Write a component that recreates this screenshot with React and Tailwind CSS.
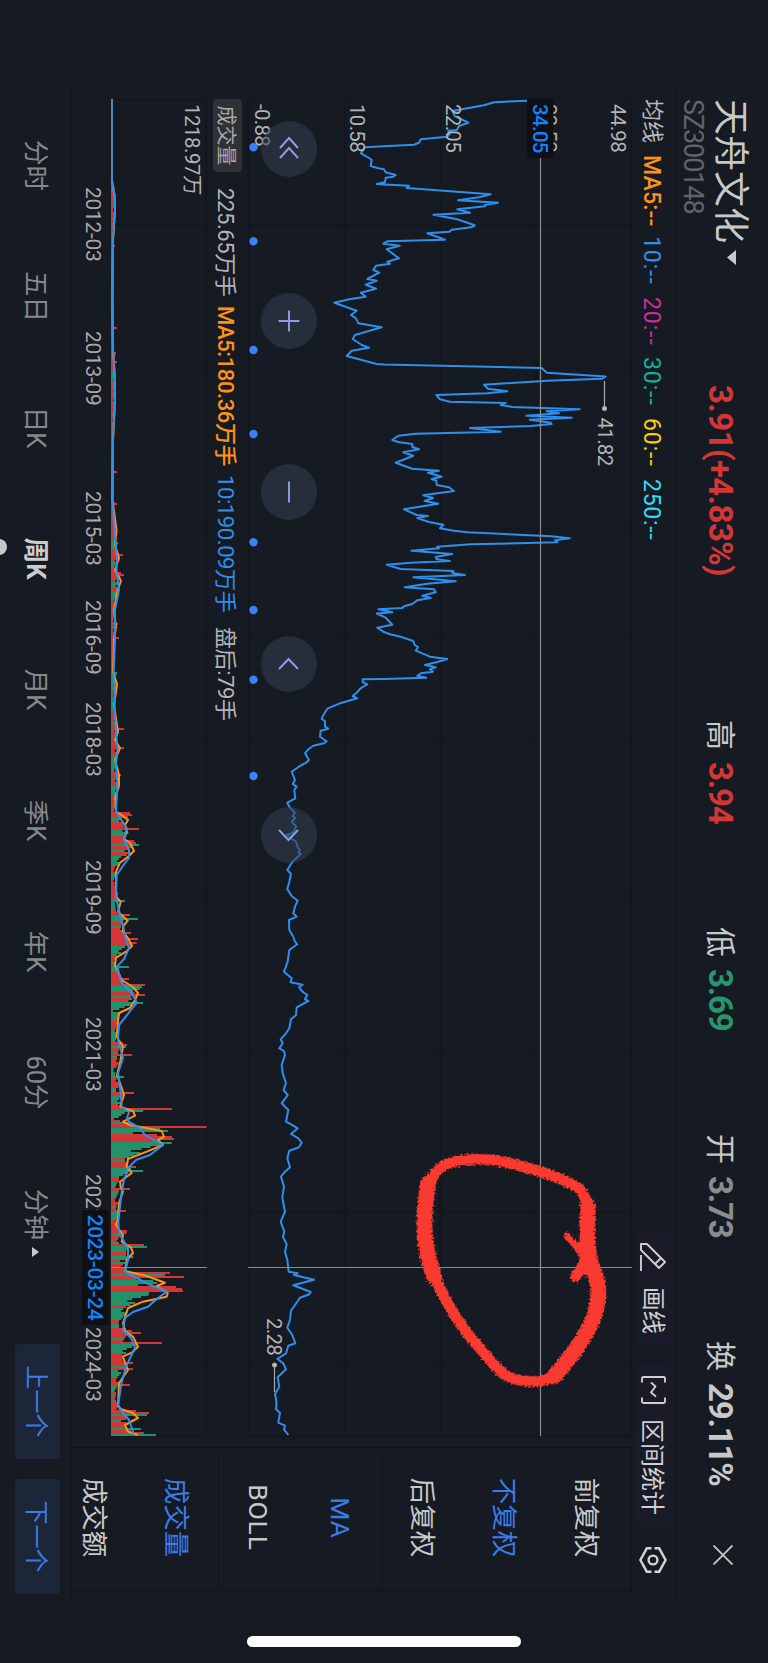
import React from "react";

// Chart geometry, in screen pixels along the time axis
const T0 = 99;
const CHART_W = 1337;
const PRICE_TOP = 632;
const PRICE_H = 384;
const VOL_H = 96;

const gridTimes = [225, 368, 528, 637, 739, 896, 1054, 1212, 1363];

const dividendDots = [147.3, 241.3, 350, 434, 542.3, 610, 679.7, 776];

// [time, level]
const price = [
  [100.7, 527], [102.3, 494], [105.3, 484], [111, 452.3], [116, 454.7], [122.7, 468.3], [126, 459], [130, 456.7],
  [130.7, 448.3], [134, 449.7], [136.7, 447.3], [139.3, 420.7], [142.7, 419], [144.7, 414], [146.3, 384], [147.3, 365],
  [153.3, 361], [157.3, 368], [160, 371.7], [166, 370.7], [168.3, 378.3], [169.3, 384], [172.3, 385.7], [175, 395.7],
  [176.7, 393.3], [177.7, 385.7], [182.3, 385], [184, 376.7], [184.5, 384], [185.7, 409], [188, 406.7], [194.3, 490.7],
  [197.3, 479], [200.3, 458], [202.7, 498], [205, 485], [206.3, 485], [209.3, 457.3], [212.7, 470], [214.7, 433.3],
  [219.3, 457.3], [225.3, 474.7], [227.3, 471.3], [229.7, 451.7], [231.7, 449.3], [233.3, 427.3], [239.7, 445],
  [241.3, 387.3], [243.7, 383.3], [245.7, 399.7], [249.3, 386.7], [258.3, 399], [261.7, 387.3], [263.7, 390],
  [265.7, 376], [270, 373.3], [272.7, 379.3], [279, 367.3], [280.7, 376.7], [284.7, 365.7], [288.7, 376],
  [292.7, 360.7], [296.7, 365.7], [299.3, 349.3], [302.7, 334.3], [310.7, 356.7], [315, 351], [318.3, 356],
  [323.3, 358.3], [327.3, 381.7], [335, 355], [339, 352.7], [345, 361.7], [347.7, 369], [350.7, 351.7], [356, 346.7],
  [364, 376.7], [364.5, 384], [368, 541.7], [372.7, 546.7], [376.5, 605.7], [378.7, 602.3], [380.7, 547.3],
  [384.7, 484], [388.7, 488], [391.3, 507.3], [393.3, 487.3], [395, 436.3], [399.3, 440], [401.7, 449.7], [403, 505.7],
  [405, 500.7], [407, 512.3], [409.3, 579.7], [411.3, 546.7], [413.3, 559], [415.7, 526.3], [417.7, 571.7],
  [419.7, 529.7], [422.7, 550.7], [424, 551.7], [426, 530.7], [428, 470], [431.7, 500.7], [433.7, 415.7],
  [435.7, 398.3], [440, 392.3], [442, 398], [444, 412.3], [447, 412.3], [449.3, 419], [452.3, 403.3], [455.7, 413.3],
  [462.7, 395.7], [468.7, 412.3], [470.7, 439], [472.7, 428], [476.7, 441.7], [479, 431.7], [480.7, 436.3],
  [485, 436.7], [487.3, 449], [491, 454], [495.3, 423.3], [498, 433], [501, 424.7], [503.7, 438.3], [509.3, 404],
  [515, 416.7], [516, 428], [518, 417.3], [522, 429], [524.7, 443.3], [528.3, 440], [530.7, 454], [532.3, 467.3],
  [536.3, 550.7], [538.3, 569.7], [540.3, 555], [542.3, 557.3], [544.3, 470.7], [546.7, 437.3], [548.3, 439],
  [550.7, 411.3], [554, 452.3], [557, 435.7], [559.3, 436.7], [561, 449.7], [562.7, 410.7], [564.7, 386.7],
  [569, 400.7], [571, 453.3], [573, 452.3], [575, 465], [577.3, 413.3], [581.3, 455.7], [583.7, 427.3],
  [587.3, 404.7], [589.3, 434], [592.3, 435.7], [595.7, 422.3], [598, 430.7], [600.3, 417.3], [604, 412.3],
  [606.3, 404], [608, 402.3], [609.3, 378.3], [612.3, 392.3], [613.5, 376.7], [617.7, 385.7], [624.7, 392.3],
  [627.7, 377.3], [631.7, 383.3], [634.3, 390], [636.7, 400.7], [641, 413.3], [645, 414.7], [647, 418], [650.7, 415.7],
  [656.7, 430], [659, 447.3], [662, 437.3], [665, 425], [667.3, 435.7], [669.3, 430], [671.7, 433], [673.3, 420.7],
  [675.7, 417.3], [677.7, 426.3], [679, 384], [679.3, 362.7], [682, 362.7], [684.3, 367.3], [688, 361], [692.7, 356.7],
  [696, 352.7], [698.3, 357.3], [703.3, 340], [708.7, 327.3], [715, 323.3], [719, 321.7], [721, 325], [726.7, 325],
  [728.7, 328.3], [730.7, 320.7], [736.7, 320], [741.3, 326.7], [743.3, 324], [745.7, 313.3], [749.3, 308.3],
  [753.3, 305], [760, 309], [762.7, 306], [766, 300], [771.7, 291.7], [780, 295], [784, 292.7], [786.7, 296.7],
  [790, 294.3], [798.3, 295.3], [802.7, 287.3], [806.7, 289.3], [812.7, 295], [816, 292.5], [818, 295.5],
  [821.3, 291.7], [826.7, 296], [832.7, 293], [835, 286.7], [841.7, 296], [847.3, 297.7], [850, 300], [852.3, 298.5],
  [854, 301], [856.7, 297.7], [862.7, 291.7], [870, 287.3], [874, 291], [881.7, 289.3], [889, 287.3], [896, 291.7],
  [900.7, 297.7], [906.7, 295], [913.3, 293.3], [916.7, 296.7], [920, 289], [930, 289.3], [936.7, 293.3],
  [941.7, 295], [944.3, 297.3], [950, 289.3], [961.7, 287.7], [971.7, 284], [978.3, 291.7], [982.3, 290.7],
  [984.7, 302.7], [987, 299], [990, 301], [992.7, 304], [995, 307.3], [999.3, 305], [1001, 308.3], [1007.3, 296.7],
  [1015, 296], [1019.3, 291], [1028.3, 289.3], [1033.3, 286], [1039.3, 280.7], [1043.3, 282.7], [1048.3, 279.3],
  [1051, 284], [1055, 285], [1065, 281.7], [1073.3, 282.7], [1083.3, 286], [1090, 283.5], [1095, 287.7],
  [1103.3, 281.7], [1110, 288.3], [1121.7, 286], [1124.7, 291.7], [1128.3, 297.7], [1134, 291], [1138.3, 298.3],
  [1142.7, 301.7], [1147.3, 299], [1150.7, 289.3], [1158.3, 287.3], [1167.3, 290], [1171.7, 285], [1176.7, 281],
  [1186.7, 284], [1197.3, 282.3], [1211.7, 285], [1221.7, 280.7], [1231.7, 284.3], [1237, 283], [1244.3, 286.7],
  [1251.7, 285], [1260, 287.3], [1271.7, 288.7], [1273.3, 297.7], [1275, 294], [1279.7, 314], [1285.3, 293.3],
  [1292, 310.7], [1294.3, 309.3], [1297.7, 300], [1305, 295], [1310.7, 291], [1320, 290], [1327.7, 287.3],
  [1335, 292.3], [1343.3, 295.3], [1345.7, 288.3], [1353.3, 286], [1359, 277.3], [1363.3, 283.3], [1369.3, 286],
  [1377.3, 277.7], [1386.7, 279.3], [1394, 275], [1402, 276.5], [1409.3, 276], [1412.7, 280], [1422.7, 278.3],
  [1425.7, 285], [1429.3, 284], [1435, 288.3],
];

// [time, height] shared by both averages while volume is flat
const volEarly = [
  [99, 0.8], [180, 0.8], [195, 3.5], [210, 4], [240, 2], [300, 1.5], [350, 2], [372, 3.5], [400, 4], [440, 2],
  [500, 1.5],
];

const volMa5 = [
  ...volEarly, [530, 5.5], [545, 4], [558, 8], [570, 4], [581, 10], [592, 6], [610, 3], [627, 5], [640, 3], [672, 2],
  [684, 6], [692, 5], [705, 3], [732, 7], [740, 4], [748, 9], [760, 4], [775, 8], [786, 8], [798, 4],
  [811.7, 5], [814, 9], [820, 17], [825, 14], [831.7, 16], [839, 13], [843, 19], [851, 23], [856.7, 17], [862.7, 9],
  [871.7, 5], [896.7, 5], [901.7, 9.7], [911.7, 7], [920.7, 16.7], [926.7, 12], [931.7, 12], [938.3, 17], [946, 21],
  [951.7, 15], [957.7, 5], [965, 4], [980, 10.7], [987, 22], [993, 27], [1000, 24], [1008, 19], [1013, 8],
  [1020.7, 7], [1036.7, 5.7], [1046.7, 12], [1063, 9], [1075, 6], [1085, 9.7], [1095, 13], [1106.7, 9], [1111, 22],
  [1115.7, 24], [1121.7, 12], [1125, 19], [1131, 50.7], [1136.7, 53], [1140, 47], [1145, 52], [1151.7, 35.7],
  [1159, 17], [1166.7, 15.7], [1173, 20.7], [1181.7, 9], [1187, 9.7], [1191.7, 12], [1203, 8], [1216.7, 7],
  [1225, 5], [1235, 12], [1241.7, 10.7], [1247.7, 20], [1253, 22], [1260, 15.7], [1271, 14], [1276, 35.7],
  [1282.7, 54], [1286, 45.7], [1293, 56.7], [1296.7, 55.7], [1301.7, 32], [1308, 17], [1323, 12], [1330.7, 14],
  [1336.7, 22], [1346.7, 27], [1352.7, 20.7], [1356.7, 11.7], [1370, 17], [1383, 8], [1405, 7], [1409, 9.7],
  [1413, 22], [1418, 27], [1425, 14], [1431.7, 17], [1435, 27],
];

const volMa10 = [
  ...volEarly, [530, 3.5], [560, 6], [570, 5.5], [590, 8], [610, 4], [640, 4], [675, 2.5], [690, 4], [710, 3.5],
  [730, 5], [750, 6.5], [765, 5], [785, 6.5], [811.7, 5], [828, 15.7], [840, 13], [850, 18], [858, 18], [863, 14],
  [875, 5.7], [896.7, 5], [915, 9], [925, 12], [936.7, 14], [948, 18], [959, 13], [966.7, 6], [982.7, 10.7],
  [993, 20.7], [1002.7, 25.7], [1021.7, 10.7], [1025, 8], [1040, 7], [1058, 12], [1073, 7], [1093, 9.7],
  [1107, 10.7], [1112, 18], [1118, 16], [1122, 18], [1128, 29], [1135, 34], [1145, 52], [1155, 39], [1160, 25],
  [1168, 17], [1180, 13], [1191.7, 10.7], [1225, 7], [1235, 9], [1247.7, 17], [1260, 17], [1271.7, 14],
  [1283, 35], [1291.7, 55.7], [1298, 47], [1306.7, 37], [1312, 22], [1318, 14], [1330, 12], [1338, 20], [1348, 24],
  [1356, 20], [1366.7, 15], [1385, 10], [1406.7, 7], [1420, 18], [1431.7, 22], [1435, 22],
];

// [from, to, start height, end height, colour]: r = up, g = down, s = mixed
const volRuns = [
  [99, 107, 1.5, 1, "s"], [107, 186, 0.5, 0.8, "g"], [186, 230, 3.5, 2, "s"], [230, 330, 1.5, 1.5, "s"],
  [330, 352, 1.5, 2, "s"], [352, 372, 4, 3, "r"], [372, 382, 3, 2.5, "g"], [382, 420, 4, 2, "s"],
  [420, 500, 2, 1.5, "s"], [500, 540, 3, 4, "r"], [540, 550, 6, 5, "g"], [550, 562, 6, 5, "r"],
  [562, 568, 4, 3, "g"], [568, 578, 7, 10, "r"], [578, 583, 6, 5, "s"], [583, 588, 7, 5, "g"], [588, 592, 6, 5, "r"],
  [592, 602, 5, 3, "g"], [602, 640, 3, 3, "s"], [640, 672, 3, 2, "r"], [672, 685, 5, 4, "g"], [685, 698, 4, 3, "s"],
  [698, 712, 3, 3, "g"], [712, 750, 4, 5, "s"], [750, 756, 5, 5, "r"], [756, 772, 4, 4, "g"], [772, 786, 5, 6, "s"],
  [786, 794, 6, 5, "g"], [794, 812, 4, 4, "s"], [812, 814, 19, 19, "r"], [814, 816, 21, 21, "r"],
  [816, 818, 17, 15, "s"], [818, 822, 10, 6, "g"], [822, 828, 10, 14, "r"], [828, 830, 28, 28, "r"],
  [830, 836, 15, 12, "g"], [836, 840, 13, 14, "r"], [840, 842, 23, 23, "r"], [842, 844, 25, 25, "r"],
  [844, 846, 28, 28, "g"], [846, 856, 22, 12, "s"], [856, 866, 10, 5, "g"], [866, 874, 4, 3, "r"],
  [874, 880, 4, 3, "g"], [880, 886, 3, 3, "s"], [886, 900, 4, 8, "r"], [900, 902, 14, 14, "g"],
  [902, 910, 3, 6, "g"], [910, 914, 5, 7, "s"], [914, 916, 19, 19, "r"], [916, 918, 12, 12, "g"],
  [918, 920, 27, 27, "g"], [920, 922, 12, 10, "g"], [922, 930, 9, 11, "s"], [930, 932, 13, 13, "r"],
  [932, 934, 20, 20, "r"], [934, 938, 13, 14, "r"], [938, 940, 27, 27, "r"], [940, 946, 22, 18, "s"],
  [946, 954, 14, 6, "g"], [954, 966, 5, 3, "s"], [966, 968, 18, 18, "g"], [968, 972, 8, 6, "g"],
  [972, 978, 6, 10, "r"], [978, 980, 18, 18, "r"], [980, 984, 12, 13, "r"], [984, 986, 34, 34, "r"],
  [986, 988, 31, 31, "g"], [988, 990, 29, 29, "g"], [990, 994, 22, 25, "s"], [994, 996, 34, 34, "r"],
  [996, 998, 20, 20, "g"], [998, 1002, 21, 14, "r"], [1002, 1004, 32, 32, "g"], [1004, 1010, 18, 5, "g"],
  [1010, 1012, 2, 2, "r"], [1012, 1020, 8, 8, "g"], [1020, 1024, 8, 6, "r"], [1024, 1030, 5, 5, "s"],
  [1030, 1042, 5, 6, "g"], [1042, 1044, 12, 12, "r"], [1044, 1046, 16, 16, "r"], [1046, 1048, 15, 15, "g"],
  [1048, 1052, 8, 7, "r"], [1052, 1054, 7, 7, "g"], [1054, 1056, 21, 21, "r"], [1056, 1058, 6, 6, "g"],
  [1058, 1068, 7, 5, "r"], [1068, 1076, 3, 4, "g"], [1076, 1078, 13, 13, "g"], [1078, 1088, 6, 8, "r"],
  [1088, 1092, 5, 5, "g"], [1092, 1094, 23, 23, "r"], [1094, 1096, 12, 12, "r"], [1096, 1104, 10, 7, "g"],
  [1104, 1108, 7, 9, "r"], [1108, 1110, 61, 61, "r"], [1110, 1112, 32, 32, "g"], [1112, 1118, 11, 6, "g"],
  [1118, 1120, 3, 3, "r"], [1120, 1126, 12, 18, "s"], [1126, 1128, 95.5, 95.5, "r"], [1128, 1130, 49, 49, "g"],
  [1130, 1132, 57, 57, "g"], [1132, 1134, 22, 22, "g"], [1134, 1136, 46, 46, "r"], [1136, 1138, 61, 61, "r"],
  [1138, 1140, 63, 63, "r"], [1140, 1142, 45, 45, "r"], [1142, 1150, 49, 30, "g"], [1150, 1158, 26, 16, "g"],
  [1158, 1160, 14, 14, "r"], [1160, 1162, 14, 14, "g"], [1162, 1166, 17, 14, "r"], [1166, 1168, 25, 25, "r"],
  [1168, 1170, 20, 20, "g"], [1170, 1172, 32, 32, "g"], [1172, 1178, 14, 5, "g"], [1178, 1182, 8, 8, "r"],
  [1182, 1188, 5, 4, "g"], [1188, 1190, 19, 19, "r"], [1190, 1192, 8, 8, "r"], [1192, 1198, 6, 5, "g"],
  [1198, 1204, 5, 6, "r"], [1204, 1210, 5, 6, "s"], [1210, 1212, 15, 15, "r"], [1212, 1220, 6, 6, "g"],
  [1220, 1230, 6, 10, "r"], [1230, 1234, 16, 15, "r"], [1234, 1242, 9, 7, "s"], [1242, 1244, 8, 8, "g"],
  [1244, 1246, 33, 33, "r"], [1246, 1248, 36, 36, "g"], [1248, 1252, 16, 14, "g"], [1252, 1256, 15, 15, "r"],
  [1256, 1260, 22, 15, "g"], [1260, 1268, 12, 9, "s"], [1268, 1272, 13, 14, "r"], [1272, 1274, 59, 59, "r"],
  [1274, 1276, 54, 54, "g"], [1276, 1278, 73, 73, "r"], [1278, 1280, 25, 25, "r"], [1280, 1284, 42, 50, "g"],
  [1284, 1286, 27, 27, "g"], [1286, 1288, 65, 65, "r"], [1288, 1290, 71, 71, "r"], [1290, 1292, 72, 72, "r"],
  [1292, 1296, 38, 37, "g"], [1296, 1298, 30, 30, "g"], [1298, 1306, 24, 15, "g"], [1306, 1308, 15, 15, "r"],
  [1308, 1320, 14, 11, "g"], [1320, 1324, 8, 7, "r"], [1324, 1328, 8, 8, "g"], [1328, 1330, 15, 15, "r"],
  [1330, 1332, 21, 21, "r"], [1332, 1334, 30, 30, "r"], [1334, 1342, 14, 16, "s"], [1342, 1344, 51, 51, "r"],
  [1344, 1354, 24, 9, "g"], [1354, 1358, 11, 10, "r"], [1358, 1362, 11, 12, "s"], [1362, 1364, 22, 22, "r"],
  [1364, 1368, 14, 14, "s"], [1368, 1370, 22, 22, "r"], [1370, 1378, 9, 6, "g"], [1378, 1384, 6, 8, "r"],
  [1384, 1386, 19, 19, "r"], [1386, 1392, 6, 4, "g"], [1392, 1400, 4, 5, "s"], [1400, 1402, 5, 5, "g"],
  [1402, 1410, 5, 7, "r"], [1410, 1412, 25, 25, "r"], [1412, 1414, 38, 38, "r"], [1414, 1416, 36, 36, "g"],
  [1416, 1420, 16, 14, "r"], [1420, 1422, 10, 10, "g"], [1422, 1428, 12, 15, "r"], [1428, 1430, 30, 30, "g"],
  [1430, 1432, 20, 20, "r"], [1432, 1434, 33, 33, "r"], [1434, 1436, 45, 45, "g"],
];

const volSpikes = [
  [245, 4], [327, 6], [361, 6], [471, 6], [503, 6], [554, 12], [574, 13], [623, 7], [637, 8], [728, 13], [747, 13],
  [774, 10],
];

const scribble = [
  [1060, 168], [1060.5, 138], [1066, 115], [1072.5, 91], [1081, 68], [1090, 50], [1107.5, 44], [1134, 45], [1161, 43],
  [1184, 33], [1211, 35], [1234, 45], [1257.5, 61], [1277.5, 78], [1283, 91], [1282, 115], [1274, 131], [1254, 148],
  [1231, 168], [1204, 185], [1177.5, 198], [1147.5, 207], [1114, 208], [1084, 204], [1066, 191],
];

const UP = "#d33636";
const DOWN = "#22926a";

const toPricePoints = (list) =>
  list.map(([t, level]) => `${t - T0},${PRICE_TOP - level}`).join(" ");

const toVolPoints = (list) =>
  list.map(([t, h]) => `${t - T0},${VOL_H - h}`).join(" ");

const mid = (a, b) => [(a[0] + b[0]) / 2, (a[1] + b[1]) / 2];

const smoothPath = (pts, close) => {
  const start = close ? mid(pts[pts.length - 1], pts[0]) : pts[0];
  let d = `M${start[0]} ${start[1]}`;
  pts.forEach((p, i) => {
    if (!close && i === pts.length - 1) {
      d += ` L${p[0]} ${p[1]}`;
      return;
    }
    const m = mid(p, pts[(i + 1) % pts.length]);
    d += ` Q${p[0]} ${p[1]} ${m[0]} ${m[1]}`;
  });
  return d;
};

const buildBars = () => {
  const bars = [];
  volRuns.forEach(([from, to, h0, h1, kind]) => {
    for (let t = from; t < to; t += 2) {
      const k = to - from > 2 ? (t - from) / (to - from) : 0;
      const wobble = to - from > 4 ? ((t * 7) % 5) * 0.12 - 0.24 : 0;
      const h = (h0 + (h1 - h0) * k) * (1 + wobble);
      const up = kind === "s" ? (t * 13) % 7 < 4 || t % 4 === 0 : kind === "r";
      bars.push({ t, h: Math.max(h, 0.8), up });
    }
  });
  return bars;
};

const bars = buildBars();

const quotes = [
  { label: "高", value: "3.94", color: "text-[#d33636]" },
  { label: "低", value: "3.69", color: "text-[#26966c]" },
  { label: "开", value: "3.73", color: "text-[#8b8c90]" },
  { label: "换", value: "29.11%", color: "text-[#c8c8c8]" },
];

const averages = [
  { text: "MA5:--", className: "w-[81px] font-medium tracking-[0.2px] text-[#ff9212]" },
  { text: "10:--", className: "w-[61px] tracking-[0.9px] text-[#2f8fec]" },
  { text: "20:--", className: "w-[60px] tracking-[0.9px] text-[#cb2f9e]" },
  { text: "30:--", className: "w-[61px] tracking-[0.9px] text-[#16b096]" },
  { text: "60:--", className: "w-[61px] tracking-[0.9px] text-[#ffc914]" },
  { text: "250:--", className: "w-[70px] tracking-[0.7px] text-[#2fdcf6]" },
];

const dates = [
  { text: "2012-03", at: 187 },
  { text: "2013-09", at: 331 },
  { text: "2015-03", at: 491 },
  { text: "2016-09", at: 600 },
  { text: "2018-03", at: 702 },
  { text: "2019-09", at: 860 },
  { text: "2021-03", at: 1017 },
  { text: "2022-09", at: 1174 },
  { text: "2024-03", at: 1327 },
];

const periods = ["分时", "五日", "日K", "周K", "月K", "季K", "年K", "60分", "分钟"];

const Header = () => (
  <header className="flex h-[93px] shrink-0 border-b border-[#10131a] pl-[11px]">
    <div className="w-[286px] pt-[13px]">
      <div className="flex h-[49px] items-center gap-[7px] text-[36px] leading-none text-[#c8c8c8]">
        <span>天舟文化</span>
        <svg className="-mt-[3px]" width="15" height="9" viewBox="0 0 15 9">
          <path d="M0 0H15L7.5 9Z" fill="#c8c8c8" />
        </svg>
      </div>
      <div className="text-[27px] leading-[26px] tracking-[-1.1px] text-[#626367]">SZ300148</div>
    </div>
    <div className="flex h-[96px] w-[335px] items-center text-[33px] font-bold tracking-[-0.6px] text-[#d33636]">
      3.91(+4.83%)
    </div>
    <div className="flex h-[94px] items-center">
      {quotes.map((q) => (
        <div key={q.label} className="flex w-[207px] items-center gap-[12px]">
          <span className="pt-[1px] text-[30px] leading-none text-[#c8c8c8]">{q.label}</span>
          <span className={`text-[33px] leading-none font-bold tracking-[-1.2px] ${q.color}`}>{q.value}</span>
        </div>
      ))}
    </div>
    <svg className="mt-[35px] -ml-[3px]" width="20" height="20" viewBox="0 0 20 20">
      <path d="M0.5 0.5L19.5 19.5M19.5 0.5L0.5 19.5" stroke="#c8c8c8" strokeWidth="1.8" />
    </svg>
  </header>
);

const AverageRow = () => (
  <div className="flex h-[43px] shrink-0 items-center pl-[11px] text-[23px] leading-none">
    <span className="w-[56px] pt-[3px] text-[22px] text-[#b9b9b9]">均线</span>
    <div className="flex w-[395px] pt-[4px]">
      {averages.map((a) => (
        <span key={a.text} className={a.className}>
          {a.text}
        </span>
      ))}
    </div>
    <div className="ml-[680px] flex h-[36px] w-[113px] items-center gap-[16px] rounded bg-[#191c28] pl-[13px] text-[23.5px] text-[#cfcfcf]">
      <svg width="28" height="26" viewBox="0 0 28 26" fill="none" stroke="#cfcfcf" strokeWidth="1.9" strokeLinejoin="round">
        <path d="M1 25V19L19 1L25 7L7 25Z" />
        <path d="M15 5L21 11" />
        <path d="M12 25H28" />
      </svg>
      <span className="pt-[3px] whitespace-nowrap">画线</span>
    </div>
    <div className="ml-[21px] flex h-[36px] w-[163px] items-center gap-[15px] rounded bg-[#191c28] pl-[12px] text-[24px] text-[#cfcfcf]">
      <svg width="28" height="25" viewBox="0 0 28 25" fill="none" stroke="#cfcfcf" strokeWidth="1.9" strokeLinejoin="round">
        <path d="M6.500 1H2.500Q1 1 1 2.500V22.500Q1 24 2.500 24H6.500" />
        <path d="M21.500 1H25.500Q27 1 27 2.500V22.500Q27 24 25.500 24H21.500" />
        <path d="M6.500 15L10.500 10.500L16.500 15L20.500 10" />
      </svg>
      <span className="pt-[3px] whitespace-nowrap">区间统计</span>
    </div>
    <svg className="ml-[20px]" width="26" height="28" viewBox="0 0 26 28" fill="none" stroke="#d4d4d4" strokeWidth="2.4">
      <path d="M1.300 12.500V7.800L13 1.400L24.700 7.800V12.500" />
      <path d="M1.300 15.500V20.200L13 26.600L24.700 20.200V15.500" />
      <circle cx="13" cy="14" r="4.400" />
    </svg>
  </div>
);

const PriceChart = () => (
  <svg className="block overflow-visible" width={CHART_W} height={PRICE_H} viewBox={`0 0 ${CHART_W} ${PRICE_H}`}>
    <defs>
      <filter id="chalk" x="-10%" y="-10%" width="120%" height="120%" colorInterpolationFilters="sRGB">
        <feGaussianBlur in="SourceGraphic" stdDeviation="2.2" result="soft" />
        <feTurbulence type="fractalNoise" baseFrequency="0.5" numOctaves="2" seed="4" result="grain" />
        <feComposite in="soft" in2="grain" operator="arithmetic" k1="0" k2="3.4" k3="3.6" k4="-3.1" result="shape" />
        <feFlood floodColor="#f93a30" />
        <feComposite in2="shape" operator="in" />
      </filter>
    </defs>
    <g stroke="#11141a" strokeWidth="1.2">
      {[0.5, 96, 192, 288, 384].map((y) => (
        <line key={y} x1="0" x2={CHART_W} y1={y} y2={y} />
      ))}
      {[T0, ...gridTimes, T0 + CHART_W].map((t) => (
        <line key={t} x1={t - T0} x2={t - T0} y1="0" y2={PRICE_H} />
      ))}
    </g>

    <polyline points={toPricePoints(price)} fill="none" stroke="#2f8fec" strokeWidth="2" strokeLinejoin="round" />

    <g fill="#b4b4b4" fontSize="20.500" letterSpacing="-0.700">
      <text x="5" y="21">44.98</text>
      <text x="5" y="90">33.52</text>
      <text x="5" y="186">22.05</text>
      <text x="5" y="282">10.58</text>
      <text x="5" y="377.500">-0.88</text>
      <text x="318.500" y="34.500">41.82</text>
      <text x="1219" y="365">2.28</text>
    </g>
    <g stroke="#a8a8a8" strokeWidth="1.2" fill="#c8c8c8">
      <line x1="282" x2="308" y1="27.500" y2="27.500" />
      <circle cx="309.500" cy="27.500" r="1.900" />
      <line x1="1267" x2="1293" y1="357.500" y2="357.500" />
      <circle cx="1266" cy="357.500" r="1.900" />
    </g>

    {dividendDots.map((t) => (
      <circle key={t} cx={t - T0} cy="378.500" r="4.200" fill="#3b82f6" />
    ))}

    {/* crosshair */}
    <line x1="0" x2={CHART_W} y1="91.500" y2="91.500" stroke="#8a8a8c" strokeWidth="1.200" />
    <line x1="1168.500" x2="1168.500" y1="0" y2={PRICE_H} stroke="#8a8a8c" strokeWidth="1.200" />
    <rect x="0" y="78.500" width="59" height="26.500" fill="#0f1014" />
    <text x="5" y="99" fontSize="20.500" letterSpacing="-0.700" fill="#0f84ff" fontWeight="500">
      34.05
    </text>

    {/* hand-drawn mark */}
    <g filter="url(#chalk)" fill="none" stroke="#f93a30" strokeLinecap="round" strokeLinejoin="round">
      <path d={smoothPath(scribble, true)} strokeWidth="11" />
      <path d={smoothPath(scribble.slice(6, 14), false)} strokeWidth="16" />
      <path d={smoothPath(scribble.slice(20, 24), false)} strokeWidth="16" />
      <path d="M1136 66L1146 57L1160 47" strokeWidth="7" />
      <path d="M1178 57L1170 51L1158 44" strokeWidth="11" />
    </g>
  </svg>
);

const VolumeChart = () => (
  <svg className="block" width={CHART_W} height={VOL_H} viewBox={`0 0 ${CHART_W} ${VOL_H}`}>
    <g stroke="#11141a" strokeWidth="1.2">
      <line x1="0" x2={CHART_W} y1="0.600" y2="0.600" />
      <line x1="0" x2={CHART_W} y1="95.500" y2="95.500" />
      {[T0 + 0.5, ...gridTimes, T0 + CHART_W - 0.5].map((t) => (
        <line key={t} x1={t - T0} x2={t - T0} y1="0" y2={VOL_H} />
      ))}
    </g>
    {bars.map((b) => (
      <rect key={b.t} x={b.t - T0} y={VOL_H - b.h} width="2" height={b.h} fill={b.up ? UP : DOWN} />
    ))}
    {volSpikes.map(([t, h]) => (
      <rect key={t} x={t - T0} y={VOL_H - h} width="2" height={h} fill={UP} />
    ))}
    <polyline points={toVolPoints(volMa5)} fill="none" stroke="#ff9212" strokeWidth="2" strokeLinejoin="round" />
    <polyline points={toVolPoints(volMa10)} fill="none" stroke="#2f8fec" strokeWidth="2" strokeLinejoin="round" />
    <line x1="1168.500" x2="1168.500" y1="0" y2={VOL_H} stroke="#8a8a8c" strokeWidth="1.200" />
    <text x="5" y="22.500" fontSize="20.500" letterSpacing="-0.500" fill="#b4b4b4">
      1218.97万
    </text>
  </svg>
);

const VolumeInfo = () => (
  <div className="flex h-[41px] items-center text-[22px] leading-none tracking-[-0.4px] whitespace-nowrap">
    <span className="flex h-[29px] w-[73px] items-center justify-center rounded bg-[#303134] pt-[3px] text-[20px] tracking-normal text-[#aaaaaa]">
      成交量
    </span>
    <div className="flex pt-[4px] pl-[16px]">
      <span className="w-[118px] text-[#b4b4b4]">225.65万手</span>
      <span className="w-[169px] font-medium text-[#ff9212]">MA5:180.36万手</span>
      <span className="w-[152px] text-[#2f8fec]">10:190.09万手</span>
      <span className="text-[#b4b4b4]">盘后:79手</span>
    </div>
  </div>
);

const chartButtons = [
  <path key="first" d="M13 5L3 14L13 23M23 5L13 14L23 23" />,
  <path key="plus" d="M14 3.500V24.500M3.500 14H24.500" />,
  <path key="minus" d="M3.500 14H24.500" />,
  <path key="prev" d="M19 5L9 14.500L19 24" />,
  <path key="next" d="M9 5L19 14.500L9 24" />,
];

const ChartControls = () => (
  <div className="absolute top-[315px] left-[22px] flex gap-[115.5px]">
    {chartButtons.map((icon) => (
      <button key={icon.key} className="flex size-14 items-center justify-center rounded-full bg-[#343e52]/55">
        <svg width="28" height="28" viewBox="0 0 28 28" fill="none" stroke="#8f9ee0" strokeWidth="1.9">
          {icon}
        </svg>
      </button>
    ))}
  </div>
);

const DateAxis = () => (
  <div className="relative h-[39px] text-[21px] leading-[36px] tracking-[-0.3px] text-[#a9a9a9]">
    {dates.map((d) => (
      <span key={d.text} className="absolute top-0" style={{ left: d.at - T0 }}>
        {d.text}
      </span>
    ))}
    <span className="absolute top-[2px] left-[1111px] flex h-[27px] w-[115px] items-center justify-center bg-[#0f1014] font-medium tracking-[-0.4px] text-[#0f84ff]">
      2023-03-24
    </span>
  </div>
);

const SideItem = ({ active, children }) => (
  <div
    className={`flex h-[82px] shrink-0 items-center justify-center pt-[5px] pr-[3px] text-[26.5px] ${
      active ? "text-[#3b7be6]" : "text-[#c8c8c8]"
    }`}
  >
    {children}
  </div>
);

const SidePanel = () => (
  <aside className="flex h-[561px] w-[144px] flex-col overflow-hidden border-x border-t border-[#10131a] pt-[2px] leading-none">
    <SideItem>前复权</SideItem>
    <SideItem active>不复权</SideItem>
    <SideItem>后复权</SideItem>
    <div className="mx-1 -mb-px h-px shrink-0 bg-[#10131a]" />
    <SideItem active>MA</SideItem>
    <SideItem>
      <span className="tracking-[0.8px]">BOLL</span>
    </SideItem>
    <div className="mx-1 -mb-px h-px shrink-0 bg-[#10131a]" />
    <SideItem active>成交量</SideItem>
    <SideItem>成交额</SideItem>
  </aside>
);

const PeriodBar = () => (
  <nav className="flex h-[72px] items-center border-t border-[#10131a] pl-[12px] text-[25.5px] leading-none">
    {periods.map((p) => (
      <div
        key={p}
        className={`relative flex h-full w-[131px] items-center justify-center ${
          p === "周K" ? "font-bold text-[#cccccc]" : "text-[#87888c]"
        } ${p === "分钟" ? "pl-[19px]" : ""}`}
      >
        {p}
        {p === "周K" && <span className="absolute top-[64px] left-[46px] h-4 w-4 rounded-lg bg-[#c8c8c8]" />}
        {p === "分钟" && (
          <svg className="ml-[7px]" width="10" height="7" viewBox="0 0 10 7">
            <path d="M0 7H10L5 0Z" fill="#c8c8c8" />
          </svg>
        )}
      </div>
    ))}
    <div className="mb-[5px] ml-[65px] flex gap-[20px] text-[24px] text-[#3b7be6]">
      <button className="h-[45px] w-[115px] rounded bg-[#1b2638] pt-[3px]">上一个</button>
      <button className="h-[45px] w-[115px] rounded bg-[#1b2638] pt-[3px]">下一个</button>
    </div>
  </nav>
);

export default function App() {
  return (
    <div className="h-[1663px] w-[768px] overflow-hidden bg-[#161b23]">
      <div className="flex h-[768px] w-[1663px] origin-top-left translate-x-[768px] rotate-90 overflow-hidden pl-[88px] font-[Roboto,'Noto_Sans_CJK_SC',sans-serif]">
        <main className="flex w-[1512px] shrink-0 flex-col">
          <Header />
          <AverageRow />
          <div className="flex h-[560px] gap-[11px] pl-[11px]">
            <section className="relative w-[1337px]">
              <PriceChart />
              <ChartControls />
              <VolumeInfo />
              <VolumeChart />
              <DateAxis />
            </section>
            <SidePanel />
          </div>
          <PeriodBar />
        </main>
        <div className="flex w-[63px] items-center pl-[36px]">
          <div className="mb-[1px] h-[274px] w-[11px] rounded-full bg-white" />
        </div>
      </div>
    </div>
  );
}
